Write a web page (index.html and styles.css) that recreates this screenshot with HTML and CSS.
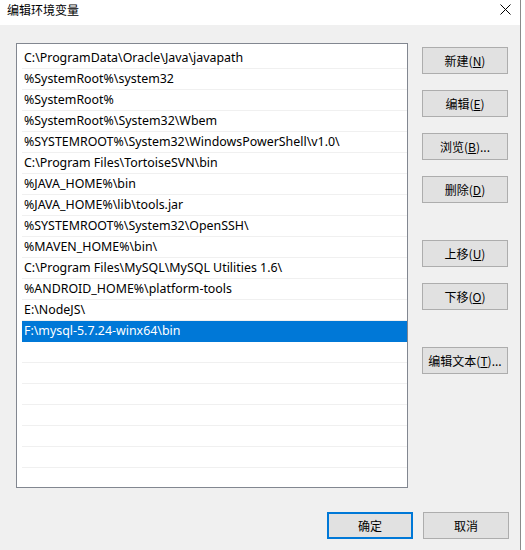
FILE: index.html
```html
<!DOCTYPE html>
<html lang="zh-CN">
<head>
<meta charset="utf-8">
<title>编辑环境变量</title>
<link rel="stylesheet" href="styles.css">
</head>
<body>
<div class="window">
  <div class="titlebar">
    <span class="title">编辑环境变量</span>
    <svg class="close" width="11" height="11" viewBox="0 0 11 11"><path d="M0.5 0.5 L10.5 10.5 M10.5 0.5 L0.5 10.5" stroke="#000" stroke-width="1" fill="none"/></svg>
  </div>
  <div class="main">
    <div class="list">
      <div class="row">C:\ProgramData\Oracle\Java\javapath</div>
      <div class="row">%SystemRoot%\system32</div>
      <div class="row">%SystemRoot%</div>
      <div class="row">%SystemRoot%\System32\Wbem</div>
      <div class="row">%SYSTEMROOT%\System32\WindowsPowerShell\v1.0\</div>
      <div class="row">C:\Program Files\TortoiseSVN\bin</div>
      <div class="row">%JAVA_HOME%\bin</div>
      <div class="row">%JAVA_HOME%\lib\tools.jar</div>
      <div class="row">%SYSTEMROOT%\System32\OpenSSH\</div>
      <div class="row">%MAVEN_HOME%\bin\</div>
      <div class="row">C:\Program Files\MySQL\MySQL Utilities 1.6\</div>
      <div class="row">%ANDROID_HOME%\platform-tools</div>
      <div class="row">E:\NodeJS\</div>
      <div class="row selected">F:\mysql-5.7.24-winx64\bin</div>
      <div class="row"></div>
      <div class="row"></div>
      <div class="row"></div>
      <div class="row"></div>
      <div class="row"></div>
      <div class="row"></div>
      <div class="row"></div>
    </div>
    <div class="side">
      <button class="btn">新建(<u>N</u>)</button>
      <button class="btn gap-s">编辑(<u>E</u>)</button>
      <button class="btn gap-s">浏览(<u>B</u>)...</button>
      <button class="btn gap-s">删除(<u>D</u>)</button>
      <button class="btn gap-l">上移(<u>U</u>)</button>
      <button class="btn gap-s">下移(<u>O</u>)</button>
      <button class="btn gap-l">编辑文本(<u>T</u>)...</button>
    </div>
  </div>
  <div class="footer">
    <button class="btn default">确定</button>
    <button class="btn">取消</button>
  </div>
</div>
</body>
</html>
```
FILE: styles.css
```css
html, body {
  margin: 0;
  padding: 0;
  background: #ffffff;
}
body {
  font-family: "Noto Sans", "Noto Sans CJK SC", sans-serif;
  font-size: 12.4px;
  color: #000;
}
.window {
  width: 520px;
  height: 550px;
  background: #f0f0f0;
  border-right: 1px solid #8a8a8a;
  display: flex;
  flex-direction: column;
  overflow: hidden;
}
.titlebar {
  height: 25px;
  background: #ffffff;
  display: flex;
  align-items: flex-start;
  justify-content: space-between;
  padding: 0 9px 0 7px;
  box-sizing: border-box;
  flex: none;
}
.title {
  font-family: "Noto Sans CJK SC", sans-serif;
  font-size: 12px;
  line-height: 16px;
  margin-top: 2px;
  color: #000;
}
.close {
  display: block;
  margin-top: 4px;
}
.main {
  display: flex;
  padding: 18px 0 0 16px;
}
.list {
  width: 385px;
  height: 439px;
  border: 1px solid #828790;
  background: #fff;
  padding: 4px 0 0 5px;
  box-sizing: content-box;
  overflow: hidden;
  display: flex;
  flex-direction: column;
}
.row {
  height: 20px;
  line-height: 20px;
  border-bottom: 1px solid #f0f0f0;
  padding-left: 2px;
  white-space: nowrap;
  flex: none;
}
.row.selected {
  background: #0078d7;
  color: #fff;
  border-bottom-color: #0078d7;
}
.side {
  display: flex;
  flex-direction: column;
  margin-left: 14px;
  padding-top: 4px;
}
.btn {
  width: 86px;
  height: 27px;
  background: #e1e1e1;
  border: 1px solid #adadad;
  font-family: "Noto Sans CJK SC", sans-serif;
  font-size: 12px;
  color: #000;
  padding: 0;
  margin: 0;
  line-height: 25px;
}
.btn u {
  text-decoration: underline;
}
.gap-s {
  margin-top: 16px;
}
.gap-l {
  margin-top: 37px;
}
.footer {
  display: flex;
  justify-content: flex-end;
  gap: 10px;
  padding: 24px 11px 0 0;
}
.btn.default {
  border: 2px solid #0078d7;
  line-height: 23px;
}
```
